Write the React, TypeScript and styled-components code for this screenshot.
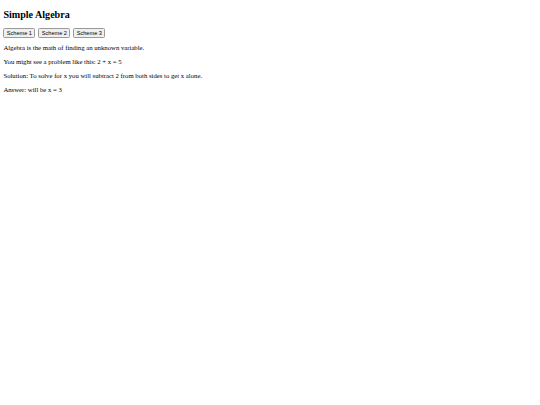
import React, { useState } from "react";
import styled, { createGlobalStyle } from "styled-components";

const GlobalStyle = createGlobalStyle`
  html, body {
    background: #ffffff;
  }
  body {
    margin: 3.4px;
    font-family: "Liberation Serif", "Times New Roman", serif;
    font-size: 6.72px;
    color: #000000;
  }
`;

const Title = styled.h2`
  font-family: "Liberation Serif", "Times New Roman", serif;
  font-size: 10.08px;
  font-weight: bold;
  line-height: normal;
  margin: 5.4px 0 8.4px;
`;

const Toolbar = styled.div`
  display: flex;
  gap: 3px;
  align-items: flex-start;
`;

const SchemeButton = styled.button<{ $active?: boolean }>`
  font-family: "Liberation Sans", Arial, sans-serif;
  font-size: 5.6px;
  line-height: normal;
  color: #000000;
  background: ${(p) => (p.$active ? "#e5e5e5" : "#efefef")};
  border: 1px solid #9a9a9a;
  border-radius: 1.5px;
  padding: 0.8px 2.4px;
  margin: 0;
  cursor: pointer;
`;

const Paragraph = styled.p`
  font-size: 6.72px;
  line-height: normal;
  margin: 6.72px 0;
`;

const schemes = ["Scheme 1", "Scheme 2", "Scheme 3"];

export default function App() {
  const [scheme, setScheme] = useState(-1);
  return (
    <>
      <GlobalStyle />
      <Title>Simple Algebra</Title>
      <Toolbar>
        {schemes.map((label, i) => (
          <SchemeButton key={label} $active={scheme === i} onClick={() => setScheme(i)}>
            {label}
          </SchemeButton>
        ))}
      </Toolbar>
      <Paragraph>Algebra is the math of finding an unknown variable.</Paragraph>
      <Paragraph>You might see a problem like this: 2 + x = 5</Paragraph>
      <Paragraph>Solution: To solve for x you will subtract 2 from both sides to get x alone.</Paragraph>
      <Paragraph>Answer: will be x = 3</Paragraph>
    </>
  );
}
